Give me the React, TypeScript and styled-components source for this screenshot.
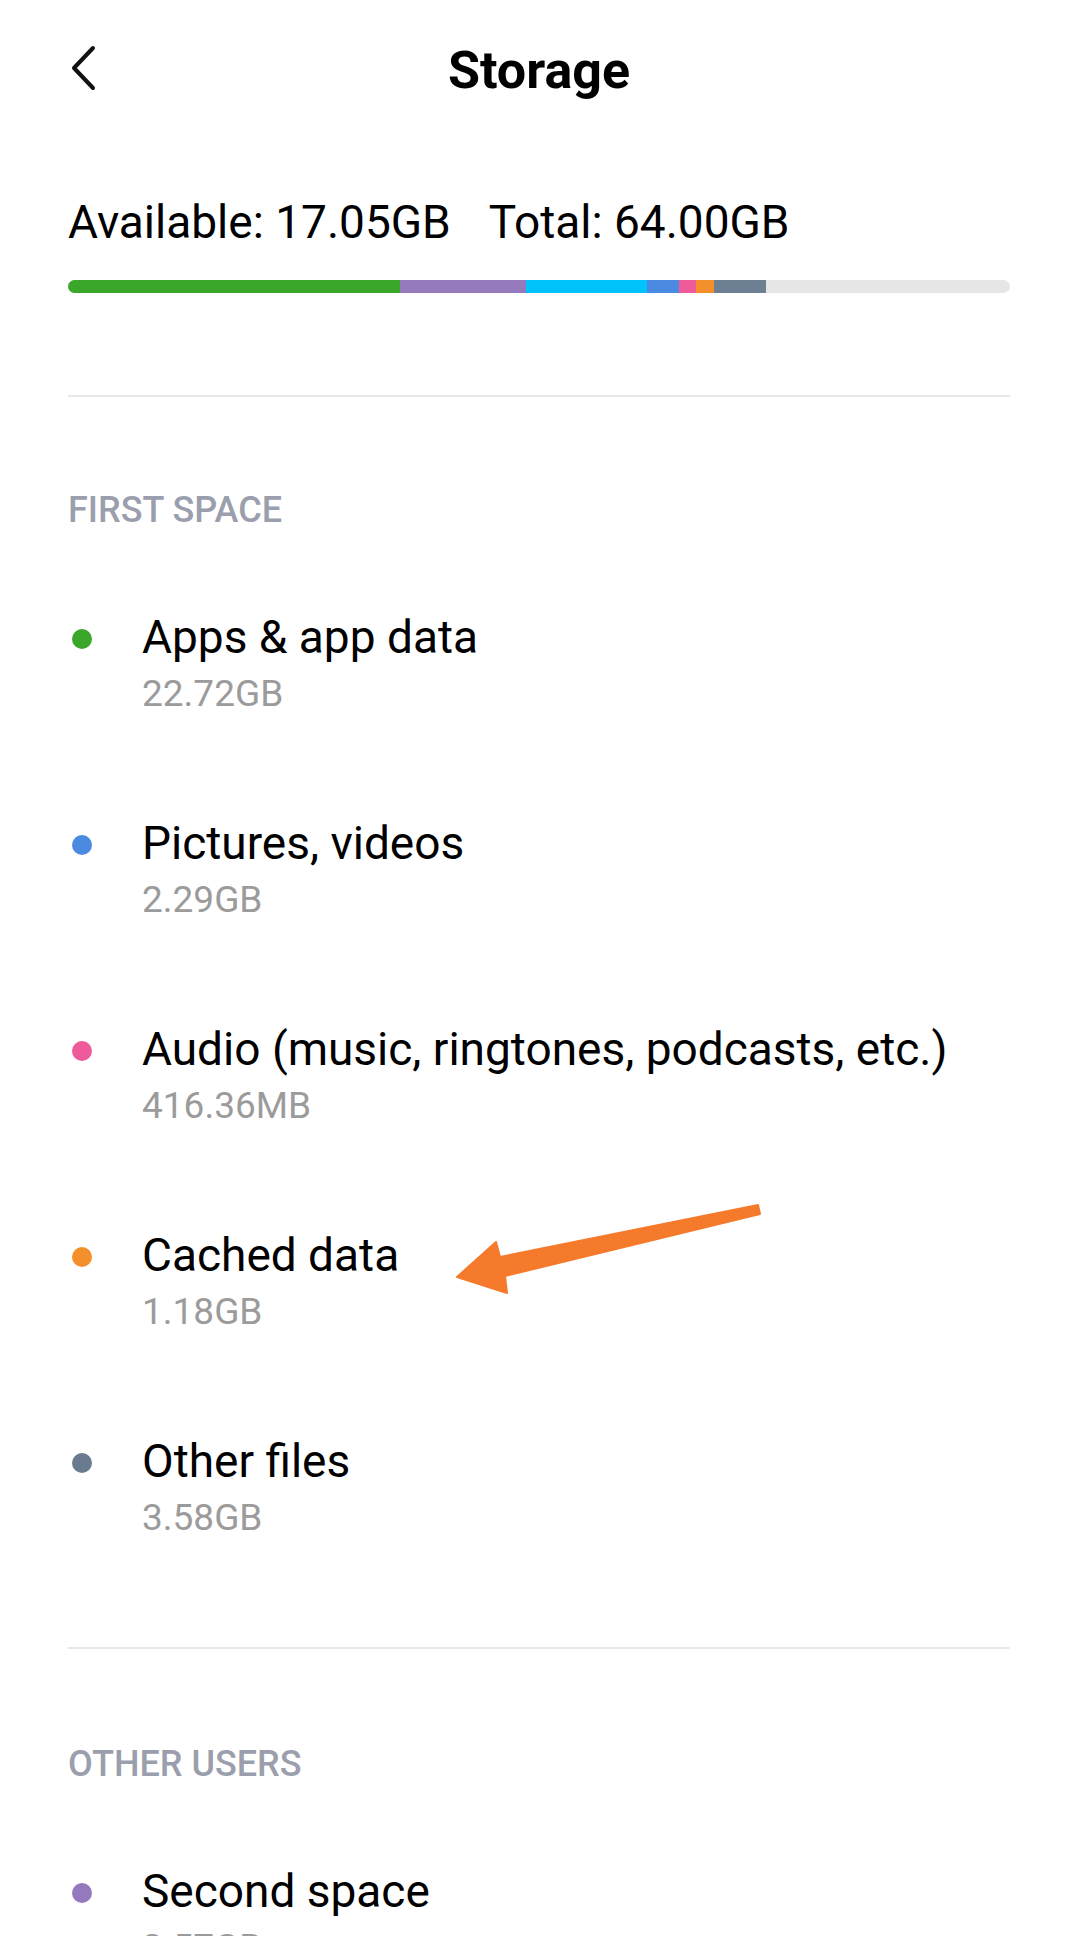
import React from "react";
import styled, { createGlobalStyle } from "styled-components";

const GlobalStyle = createGlobalStyle`
  * {
    box-sizing: border-box;
  }
  body {
    margin: 0;
    background: #ffffff;
    font-family: Roboto, "Noto Sans", "Liberation Sans", sans-serif;
    -webkit-font-smoothing: antialiased;
  }
`;

export const Page = styled.div`
  position: relative;
  width: 1067px;
  height: 1936px;
  overflow: hidden;
  padding: 0 57px 0 68px;
  background: #ffffff;
`;

export const Header = styled.header`
  display: grid;
  grid-template-columns: 1fr auto 1fr;
  align-items: center;
  padding-top: 41px;
  height: 101px;
`;

export const BackButton = styled.button`
  justify-self: start;
  display: flex;
  align-items: center;
  padding: 0;
  margin: -6px 0 0 2px;
  border: none;
  background: none;
  cursor: pointer;
`;

export const Title = styled.h1`
  margin: 0;
  font-size: 52px;
  line-height: 60px;
  font-weight: 700;
  color: #000000;
`;

export const Summary = styled.div`
  display: flex;
  gap: 38px;
  margin-top: 95px;
  font-size: 46px;
  line-height: 52px;
  color: #000000;
`;

export const Bar = styled.div`
  display: flex;
  height: 13px;
  margin-top: 32px;
  border-radius: 7px;
  overflow: hidden;
  background: #e6e6e6;
`;

export const Segment = styled.div<{ $color: string }>`
  height: 100%;
  background: ${({ $color }) => $color};
`;

export const Divider = styled.hr<{ $gap?: number }>`
  margin: ${({ $gap = 102 }) => $gap}px 0 0;
  height: 2px;
  border: none;
  background: #e8e8e8;
`;

export const Section = styled.section<{ $top?: number }>`
  display: flex;
  flex-direction: column;
  gap: 101px;
  margin-top: ${({ $top = 92 }) => $top}px;
`;

export const SectionTitle = styled.h2`
  margin: 0 0 -21px;
  font-size: 36px;
  line-height: 42px;
  font-weight: 500;
  color: #9b9fad;
`;

export const Item = styled.div`
  display: grid;
  grid-template-columns: 20px 1fr;
  column-gap: 50px;
  padding-left: 4px;
`;

export const Dot = styled.span<{ $color: string }>`
  width: 20px;
  height: 20px;
  margin-top: 18px;
  border-radius: 50%;
  background: ${({ $color }) => $color};
`;

export const ItemText = styled.div`
  display: flex;
  flex-direction: column;
  gap: 9px;
`;

export const ItemLabel = styled.span`
  font-size: 46px;
  line-height: 52px;
  color: #000000;
`;

export const ItemValue = styled.span`
  font-size: 37px;
  line-height: 44px;
  color: #9b9b9b;
`;

export const Annotation = styled.svg`
  position: absolute;
  left: 0;
  top: 0;
  pointer-events: none;
`;

const segments = [
  { color: "#3aa62a", width: 332 },
  { color: "#9479bd", width: 126 },
  { color: "#00c3fb", width: 121 },
  { color: "#4a8ae0", width: 32 },
  { color: "#ee5a9a", width: 17 },
  { color: "#f4902b", width: 18 },
  { color: "#6d7f93", width: 52 },
];

const firstSpace = [
  { label: "Apps & app data", value: "22.72GB", color: "#3aa62a" },
  { label: "Pictures, videos", value: "2.29GB", color: "#4a8ae0" },
  { label: "Audio (music, ringtones, podcasts, etc.)", value: "416.36MB", color: "#ee5a9a" },
  { label: "Cached data", value: "1.18GB", color: "#f4902b" },
  { label: "Other files", value: "3.58GB", color: "#6b7b8f" },
];

const otherUsers = [{ label: "Second space", value: "2.57GB", color: "#9479bd" }];

const BAR_WIDTH = 942;

const Entry = ({ label, value, color }: { label: string; value: string; color: string }) => (
  <Item>
    <Dot $color={color} />
    <ItemText>
      <ItemLabel>{label}</ItemLabel>
      <ItemValue>{value}</ItemValue>
    </ItemText>
  </Item>
);

const App = () => {
  return (
    <>
      <GlobalStyle />
      <Page>
        <Header>
          <BackButton aria-label="Back">
            <svg width="28" height="46" viewBox="0 0 28 46">
              <path
                d="M23 3 L4 23 L23 43"
                fill="none"
                stroke="#111111"
                strokeWidth="4"
                strokeLinecap="round"
                strokeLinejoin="round"
              />
            </svg>
          </BackButton>
          <Title>Storage</Title>
          <span />
        </Header>

        <Summary>
          <span>Available: 17.05GB</span>
          <span>Total: 64.00GB</span>
        </Summary>

        <Bar>
          {segments.map((s) => (
            <Segment
              key={s.color}
              $color={s.color}
              style={{ width: `${(s.width / BAR_WIDTH) * 100}%` }}
            />
          ))}
        </Bar>

        <Divider />

        <Section>
          <SectionTitle>FIRST SPACE</SectionTitle>
          {firstSpace.map((item) => (
            <Entry key={item.label} {...item} />
          ))}
        </Section>

        <Divider $gap={107} />

        <Section $top={94}>
          <SectionTitle>OTHER USERS</SectionTitle>
          {otherUsers.map((item) => (
            <Entry key={item.label} {...item} />
          ))}
        </Section>

        <Annotation width="1067" height="1936" viewBox="0 0 1067 1936">
          <polygon
            points="758,1205 760,1214 505,1276 507,1293 457,1277 496,1242 500,1257"
            fill="#f57a2c"
            stroke="#f57a2c"
            strokeWidth="2"
            strokeLinejoin="round"
          />
        </Annotation>
      </Page>
    </>
  );
};

export default App;
